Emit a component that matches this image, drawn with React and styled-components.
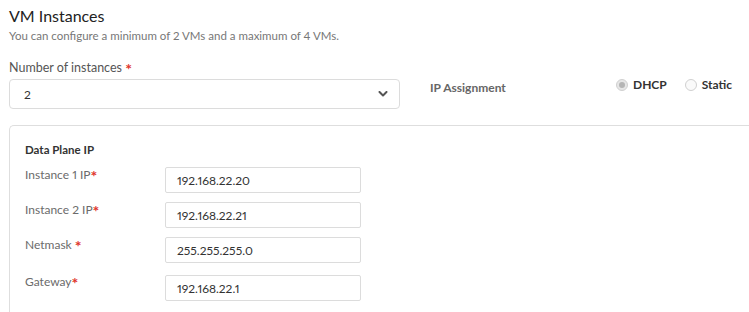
import React from "react"
import styled, { createGlobalStyle } from "styled-components"

const GlobalStyle = createGlobalStyle`
        html, body {
                margin: 0;
                padding: 0;
                background: #fff;
                overflow: hidden;
        }
        body {
                font-family: Lato, "Open Sans", "Liberation Sans", sans-serif;
                color: #333;
                font-variant-numeric: proportional-nums;
        }
        * { box-sizing: border-box; }
`

const Page = styled.div`
        padding: 5px 0 0 9px;
`

const Title = styled.h2`
        margin: 0;
        font-size: 16px;
        line-height: 22px;
        font-weight: 400;
        color: #222;
`

const Subtitle = styled.p`
        margin: 1px 0 0;
        font-size: 11.5px;
        line-height: 16px;
        color: #777;
`

const TopRow = styled.div`
        display: flex;
        align-items: flex-start;
        margin-top: 16px;
`

const SelectField = styled.div`
        width: 391px;
`

const FieldLabel = styled.label`
        display: block;
        font-size: 12.5px;
        line-height: 16px;
        color: #555;
`

const Req = styled.span`
        color: #e0352b;
        font-weight: 700;
        font-size: 16px;
        line-height: 0;
        position: relative;
        top: 3px;
`

const Select = styled.div`
        margin-top: 3px;
        height: 30px;
        border: 1px solid #dcdcdc;
        border-radius: 4px;
        padding: 0 11px 0 14px;
        display: flex;
        align-items: center;
        justify-content: space-between;
        font-size: 12px;
        color: #333;
`

const IpLabel = styled.div`
        width: 186px;
        margin-left: 30px;
        padding-top: 20px;
        font-size: 12px;
        line-height: 16px;
        font-weight: 700;
        color: #666;
`

const RadioGroup = styled.div`
        display: flex;
        gap: 18px;
        padding-top: 18px;
`

const RadioItem = styled.label`
        display: flex;
        align-items: center;
        gap: 5px;
        font-size: 12px;
        line-height: 14px;
        font-weight: 700;
        color: #333;
`

const RadioDot = styled.span`
        width: 12px;
        height: 12px;
        border-radius: 50%;
        border: 1px solid #d0d0d0;
        background: ${p => (p.checked ? "#e6e6e6" : "#fafafa")};
        display: flex;
        align-items: center;
        justify-content: center;
        &::after {
                content: "";
                width: 6px;
                height: 6px;
                border-radius: 50%;
                background: ${p => (p.checked ? "#b5b5b5" : "transparent")};
        }
`

const Panel = styled.section`
        margin-top: 16px;
        border: 1px solid #dedede;
        border-right: none;
        border-radius: 5px 0 0 5px;
        padding: 16px 15px 20px;
        min-height: 200px;
`

const PanelTitle = styled.h4`
        margin: 0;
        font-size: 11.5px;
        line-height: 16px;
        font-weight: 700;
        color: #333;
`

const Fields = styled.div`
        display: flex;
        flex-direction: column;
        gap: 9px;
        margin-top: 9px;
`

const FieldRow = styled.div`
        display: flex;
        align-items: flex-start;
        margin-top: ${p => (p.spaced ? "3px" : "0")};
`

const RowLabel = styled.div`
        width: 140px;
        font-size: 12px;
        line-height: 13px;
        padding-top: ${p => (p.tight ? "0" : "1px")};
        color: #6b6b6b;
`

const TextBox = styled.div`
        width: 196px;
        height: 26px;
        border: 1px solid #dcdcdc;
        border-radius: 2px;
        padding: 0 11px;
        display: flex;
        align-items: center;
        font-size: 12px;
        color: #333;
`

const Chevron = () => (
        <svg width="10" height="6" viewBox="0 0 10 6">
                <polyline points="1.5,1 5,4.5 8.5,1" fill="none" stroke="#555" strokeWidth="2" strokeLinecap="round" strokeLinejoin="round" />
        </svg>
)

const rows = [
        { label: "Instance 1 IP", sep: "", value: "192.168.22.20" },
        { label: "Instance 2 IP", sep: "", value: "192.168.22.21" },
        { label: "Netmask", sep: " ", value: "255.255.255.0" },
        { label: "Gateway", sep: "", value: "192.168.22.1", spaced: true },
]

export default function App() {
        return (
                <Page>
                        <GlobalStyle />
                        <Title>VM Instances</Title>
                        <Subtitle>You can configure a minimum of 2 VMs and a maximum of 4 VMs.</Subtitle>

                        <TopRow>
                                <SelectField>
                                        <FieldLabel>Number of instances <Req>*</Req></FieldLabel>
                                        <Select>
                                                <span>2</span>
                                                <Chevron />
                                        </Select>
                                </SelectField>
                                <IpLabel>IP Assignment</IpLabel>
                                <RadioGroup>
                                        <RadioItem><RadioDot checked />DHCP</RadioItem>
                                        <RadioItem><RadioDot />Static</RadioItem>
                                </RadioGroup>
                        </TopRow>

                        <Panel>
                                <PanelTitle>Data Plane IP</PanelTitle>
                                <Fields>
                                        {rows.map(r => (
                                                <FieldRow key={r.label} spaced={r.spaced}>
                                                        <RowLabel tight={r.spaced}>{r.label}{r.sep}<Req>*</Req></RowLabel>
                                                        <TextBox>{r.value}</TextBox>
                                                </FieldRow>
                                        ))}
                                </Fields>
                        </Panel>
                </Page>
        )
}
